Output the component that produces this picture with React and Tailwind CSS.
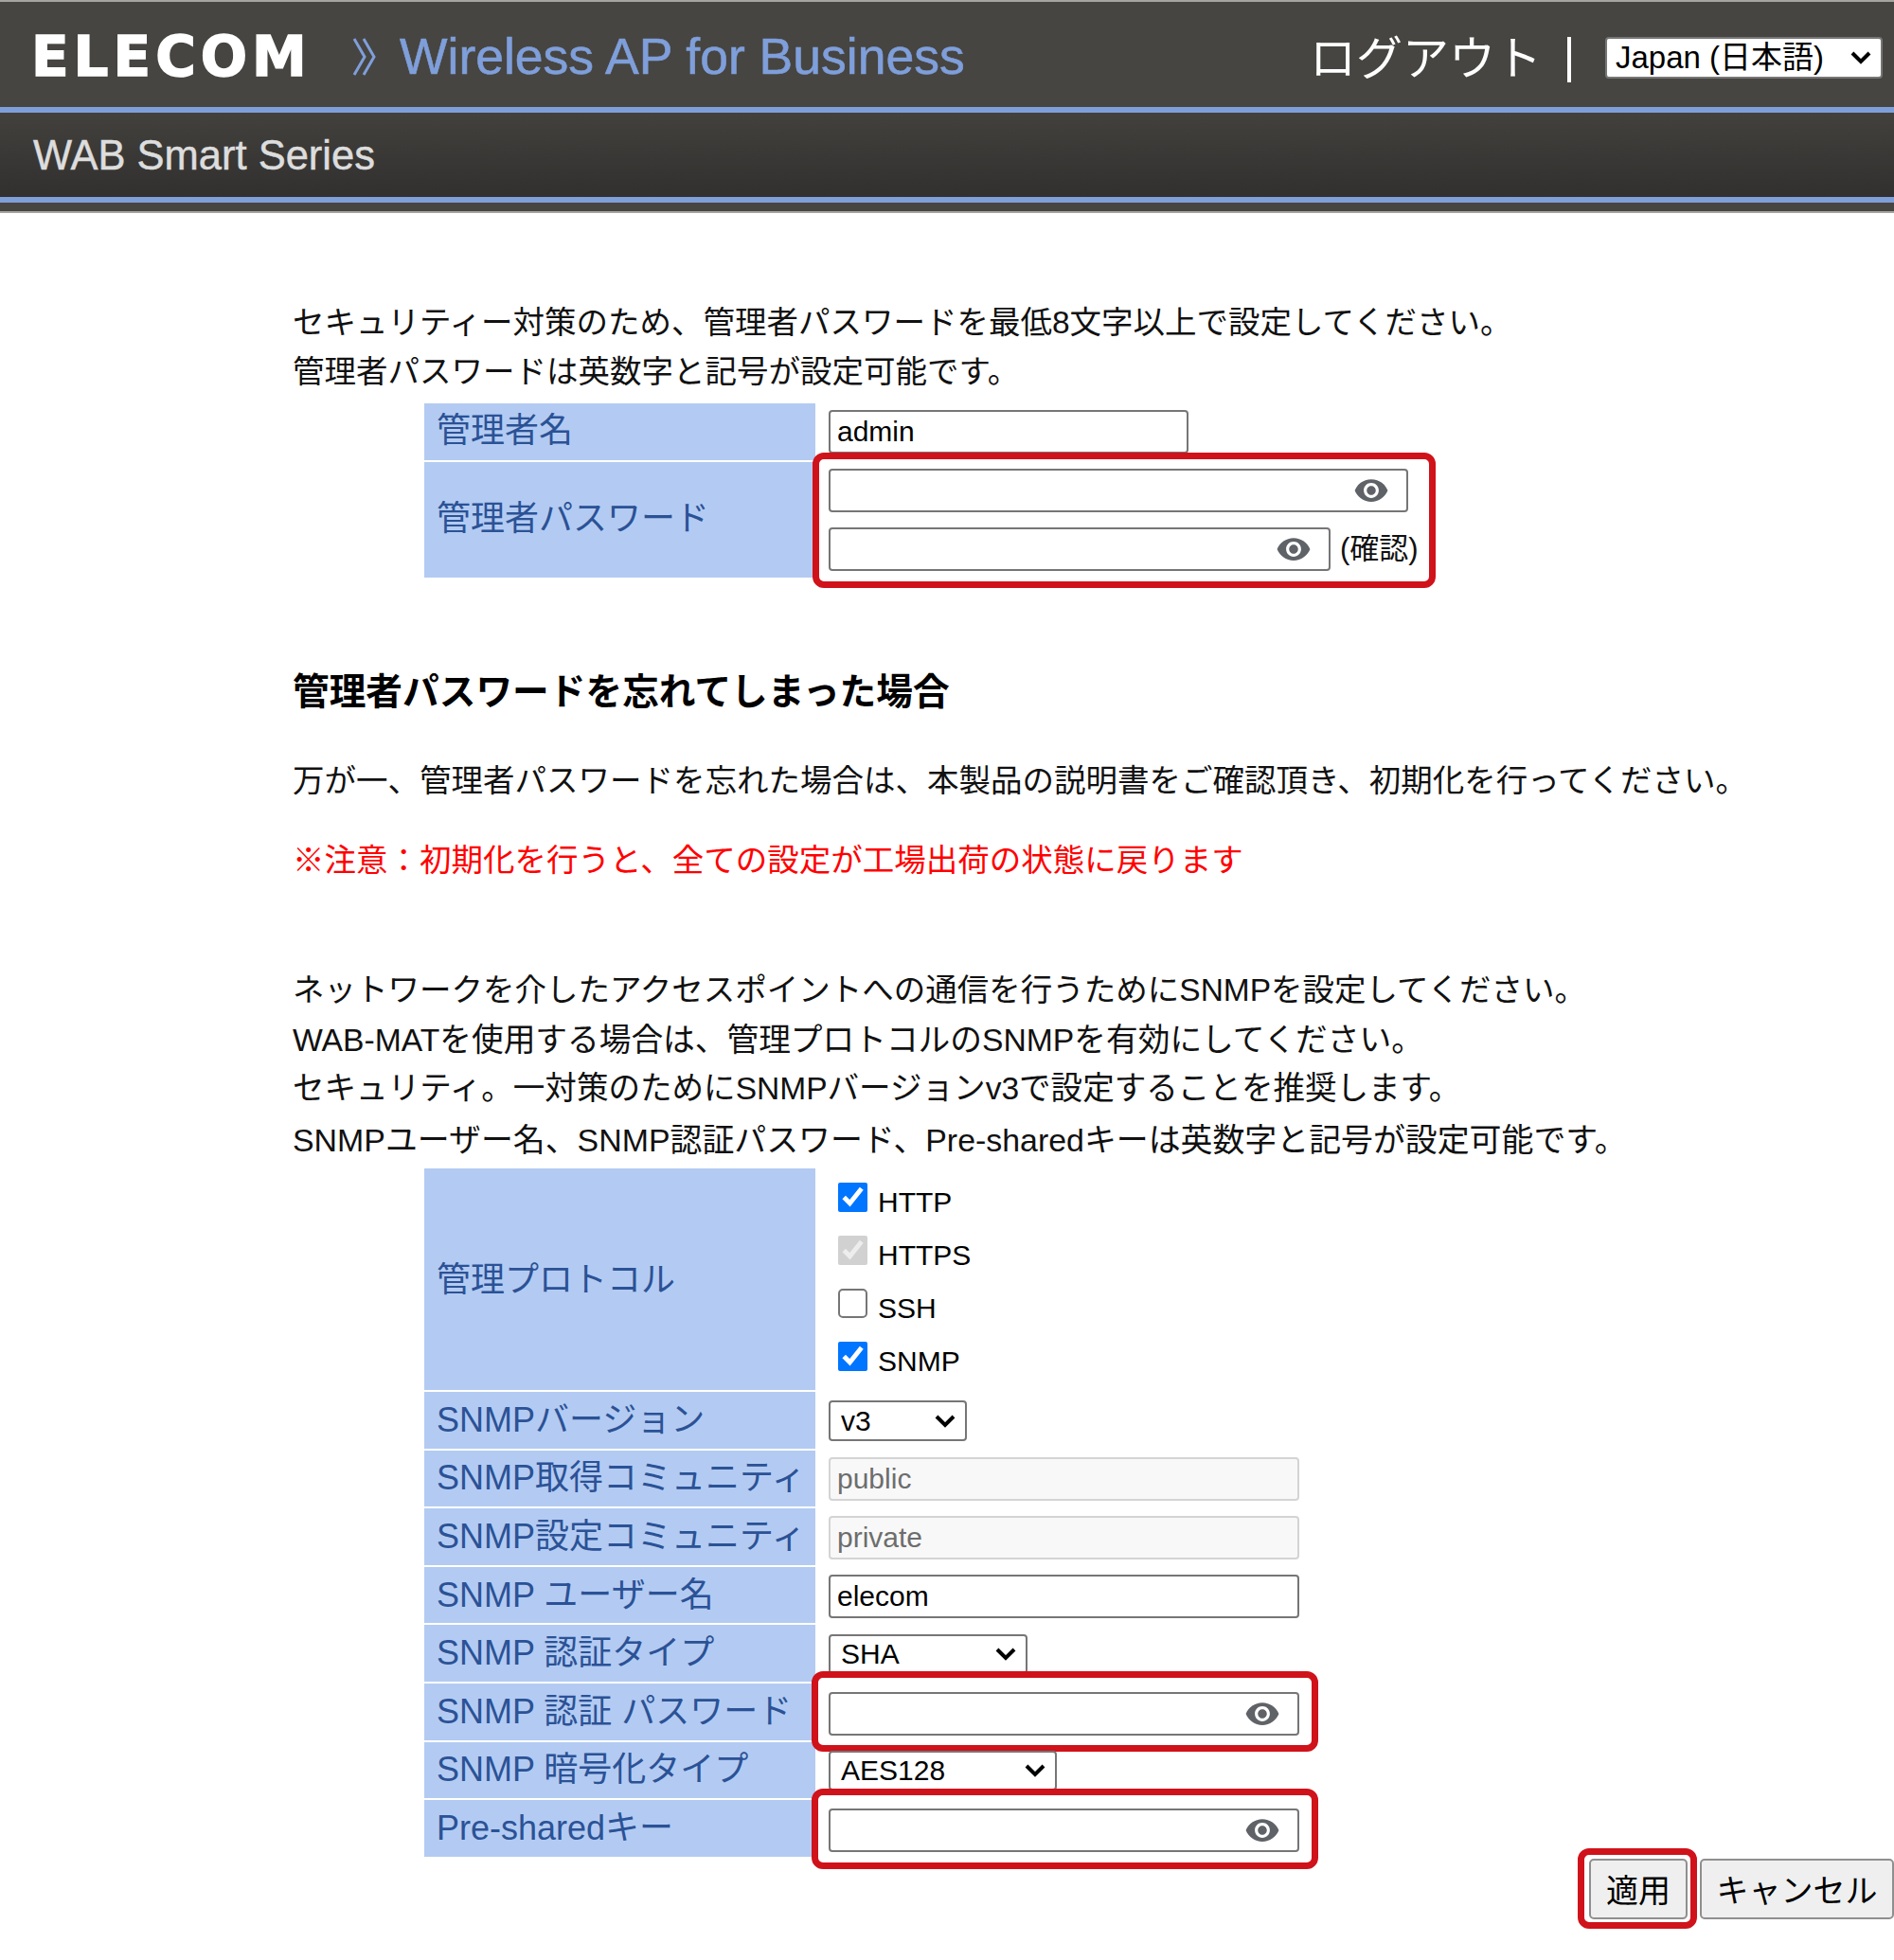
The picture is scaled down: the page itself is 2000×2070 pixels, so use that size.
import React from "react";
import { MdVisibility } from "react-icons/md";

const inputClass =
  "block h-[46px] rounded-[4px] border-2 border-[#767676] bg-white px-[7px] text-[30px] text-black outline-none";
const disabledClass =
  "block h-[46px] w-[497px] rounded-[4px] border-2 border-[#d4d4d4] bg-[#f8f8f8] px-[7px] text-[30px] text-[#6d6d6d] outline-none";

const Label = ({ children, className = "" }) => (
  <div className={`flex items-center bg-[#b3cbf2] pl-[13px] text-[36px] text-[#2b5296] ${className}`}>
    {children}
  </div>
);

const Highlight = ({ className }) => (
  <div className={`pointer-events-none absolute rounded-[12px] border-[7px] border-[#d0121b] ${className}`} />
);

const PasswordInput = ({ className }) => (
  <div className={`relative ${className}`}>
    <input type="password" className={`${inputClass} w-full`} />
    <MdVisibility className="absolute right-[20px] top-[4px] h-[38px] w-[38px] text-[#5f6368]" />
  </div>
);

const Select = ({ value, className, textClass = "text-[30px] leading-[34px] pl-[11px]" }) => (
  <div className={`relative ${className}`}>
    <select className={`block h-full w-full appearance-none rounded-[4px] border-2 border-[#767676] bg-white text-black ${textClass}`}>
      <option>{value}</option>
    </select>
    <svg
      width="22"
      height="14"
      viewBox="0 0 22 14"
      className="pointer-events-none absolute right-[12px] top-1/2 -translate-y-1/2 fill-none stroke-black stroke-[4px]"
    >
      <path d="M2 2 L11 11 L20 2" />
    </svg>
  </div>
);

const Check = ({ label, checked, disabled, className = "" }) => (
  <label className="flex h-[56px] items-start">
    <input
      type="checkbox"
      defaultChecked={checked}
      disabled={disabled}
      className={`m-0 mt-[2px] h-[31px] w-[31px] ${className}`}
    />
    <span className="ml-[11px] mt-[4px] text-[30px] leading-[38px] text-black">{label}</span>
  </label>
);

const Row = ({ label, children }) => (
  <>
    <Label className="h-[59.6px]">{label}</Label>
    <div className="relative flex h-[59.6px] items-center pl-[14px] pt-[2px]">{children}</div>
  </>
);

const App = () => {
  return (
    <div className="h-[2070px] w-[2000px] overflow-hidden bg-white font-['Liberation_Sans','Noto_Sans_CJK_JP',sans-serif]">
      {/* header */}
      <div className="border-t-[2px] border-[#a5a49f] bg-[#474541]">
        <div className="flex h-[111px] items-center pl-[33px] pr-[12px] pt-[5px]">
          <span className="w-[339px] text-[58px] font-bold leading-none tracking-[5px] text-white font-['DejaVu_Sans',sans-serif] [-webkit-text-stroke:1.5px_white]">
            ELECOM
          </span>
          <svg width="26" height="40" viewBox="0 0 26 40" className="fill-none stroke-[#7f9fdb] stroke-[3px]">
            <path d="M2 1 L13 20 L2 39" />
            <path d="M12 1 L23 20 L12 39" />
          </svg>
          <span className="ml-[24px] text-[53.5px] leading-none text-[#7f9fdb] [-webkit-text-stroke:0.6px_#7f9fdb]">
            Wireless AP for Business
          </span>
          <span className="ml-auto mt-[5px] text-[49px] leading-none text-white">ログアウト</span>
          <span className="ml-[27px] mt-[5px] h-[48px] w-[4px] bg-white" />
          <Select value="Japan (日本語)" className="ml-[36px] mt-[2px] h-[44px] w-[293px]" textClass="pl-[9px] leading-[36px] text-[33px]" />
        </div>
      </div>
      <div className="h-[6px] bg-[#7f9fdb]" />
      <div className="flex h-[89px] items-center bg-linear-to-b from-[#43413e] to-[#31302e] pl-[35px] pt-[2px] text-[43.5px] text-[#dddddd] [-webkit-text-stroke:0.5px_#dddddd]">
        WAB Smart Series
      </div>
      <div className="h-[6px] bg-[#7f9fdb]" />
      <div className="h-[11px] border-b-[2px] border-[#a5a49f] bg-[#474541]" />

      {/* body */}
      <div className="pl-[309px] pt-[90px] text-[33.5px] leading-[52px] text-[#111111]">
        <p>セキュリティー対策のため、管理者パスワードを最低8文字以上で設定してください。</p>
        <p>管理者パスワードは英数字と記号が設定可能です。</p>

        <div className="ml-[139px] mt-[7px] grid w-[1100px] grid-cols-[413px_1fr] gap-y-[2px]">
          <Label className="h-[60px] pb-[2px]">管理者名</Label>
          <div className="pl-[14px] pt-[7px]">
            <input defaultValue="admin" className={`${inputClass} w-[380px]`} />
          </div>
          <Label className="h-[122px] pb-[2px]">管理者パスワード</Label>
          <div className="relative pl-[14px] pt-[7px]">
            <PasswordInput className="w-[612px]" />
            <div className="mt-[16px] flex items-center">
              <PasswordInput className="w-[530px]" />
              <span className="ml-[10px] text-[31px] leading-[46px]">(確認)</span>
            </div>
            <Highlight className="-top-[10px] left-[-3px] h-[143px] w-[658px]" />
          </div>
        </div>

        <h2 className="mt-[95px] text-[38.7px] font-bold leading-[52px] text-black">管理者パスワードを忘れてしまった場合</h2>
        <p className="mt-[42px]">万が一、管理者パスワードを忘れた場合は、本製品の説明書をご確認頂き、初期化を行ってください。</p>
        <p className="mt-[32px] text-[#ff0000]">※注意：初期化を行うと、全ての設定が工場出荷の状態に戻ります</p>
        <p className="mt-[85px]">ネットワークを介したアクセスポイントへの通信を行うためにSNMPを設定してください。</p>
        <p className="text-[33.7px]">WAB-MATを使用する場合は、管理プロトコルのSNMPを有効にしてください。</p>
        <p className="text-[33.55px]">セキュリティ。一対策のためにSNMPバージョンv3で設定することを推奨します。</p>
        <p className="mt-[2px] text-[33.9px]">SNMPユーザー名、SNMP認証パスワード、Pre-sharedキーは英数字と記号が設定可能です。</p>

        <div className="ml-[139px] mt-[4px] grid w-[1100px] grid-cols-[413px_1fr] gap-y-[2px]">
          <Label className="h-[234px] pt-[2px]">管理プロトコル</Label>
          <div className="h-[234px] pl-[24px] pt-[13px]">
            <Check label="HTTP" checked />
            <Check label="HTTPS" checked disabled />
            <Check label="SSH" className="appearance-none rounded-[5px] border-2 border-[#767676] bg-white" />
            <Check label="SNMP" checked />
          </div>
          <Row label="SNMPバージョン">
            <Select value="v3" className="h-[43px] w-[146px]" />
          </Row>
          <Row label="SNMP取得コミュニティ">
            <input disabled defaultValue="public" className={disabledClass} />
          </Row>
          <Row label="SNMP設定コミュニティ">
            <input disabled defaultValue="private" className={disabledClass} />
          </Row>
          <Row label="SNMP ユーザー名">
            <input defaultValue="elecom" className={`${inputClass} w-[497px]`} />
          </Row>
          <Row label="SNMP 認証タイプ">
            <Select value="SHA" className="h-[42px] w-[210px]" />
          </Row>
          <Row label="SNMP 認証 パスワード">
            <PasswordInput className="mt-[2px] w-[497px]" />
            <Highlight className="left-[-4px] top-[-13px] h-[85px] w-[535px]" />
          </Row>
          <Row label="SNMP 暗号化タイプ">
            <Select value="AES128" className="h-[42px] w-[241px]" />
          </Row>
          <Row label="Pre-sharedキー">
            <PasswordInput className="mt-[2px] w-[497px]" />
            <Highlight className="left-[-4px] top-[-12px] h-[85px] w-[535px]" />
          </Row>
        </div>
      </div>

      {/* buttons */}
      <div className="mt-[2px] flex justify-end">
        <div className="relative">
          <button className="h-[64px] w-[104px] rounded-[5px] border-2 border-[#8f8f8f] bg-[#efefef] pt-[5px] text-[34px] text-black">適用</button>
          <Highlight className="-left-[12px] -right-[10px] -top-[11px] -bottom-[10px]" />
        </div>
        <button className="ml-[13px] h-[64px] w-[205px] rounded-[5px] border-2 border-[#8f8f8f] bg-[#efefef] pt-[5px] text-[34px] text-black">キャンセル</button>
      </div>
    </div>
  );
};

export default App;
